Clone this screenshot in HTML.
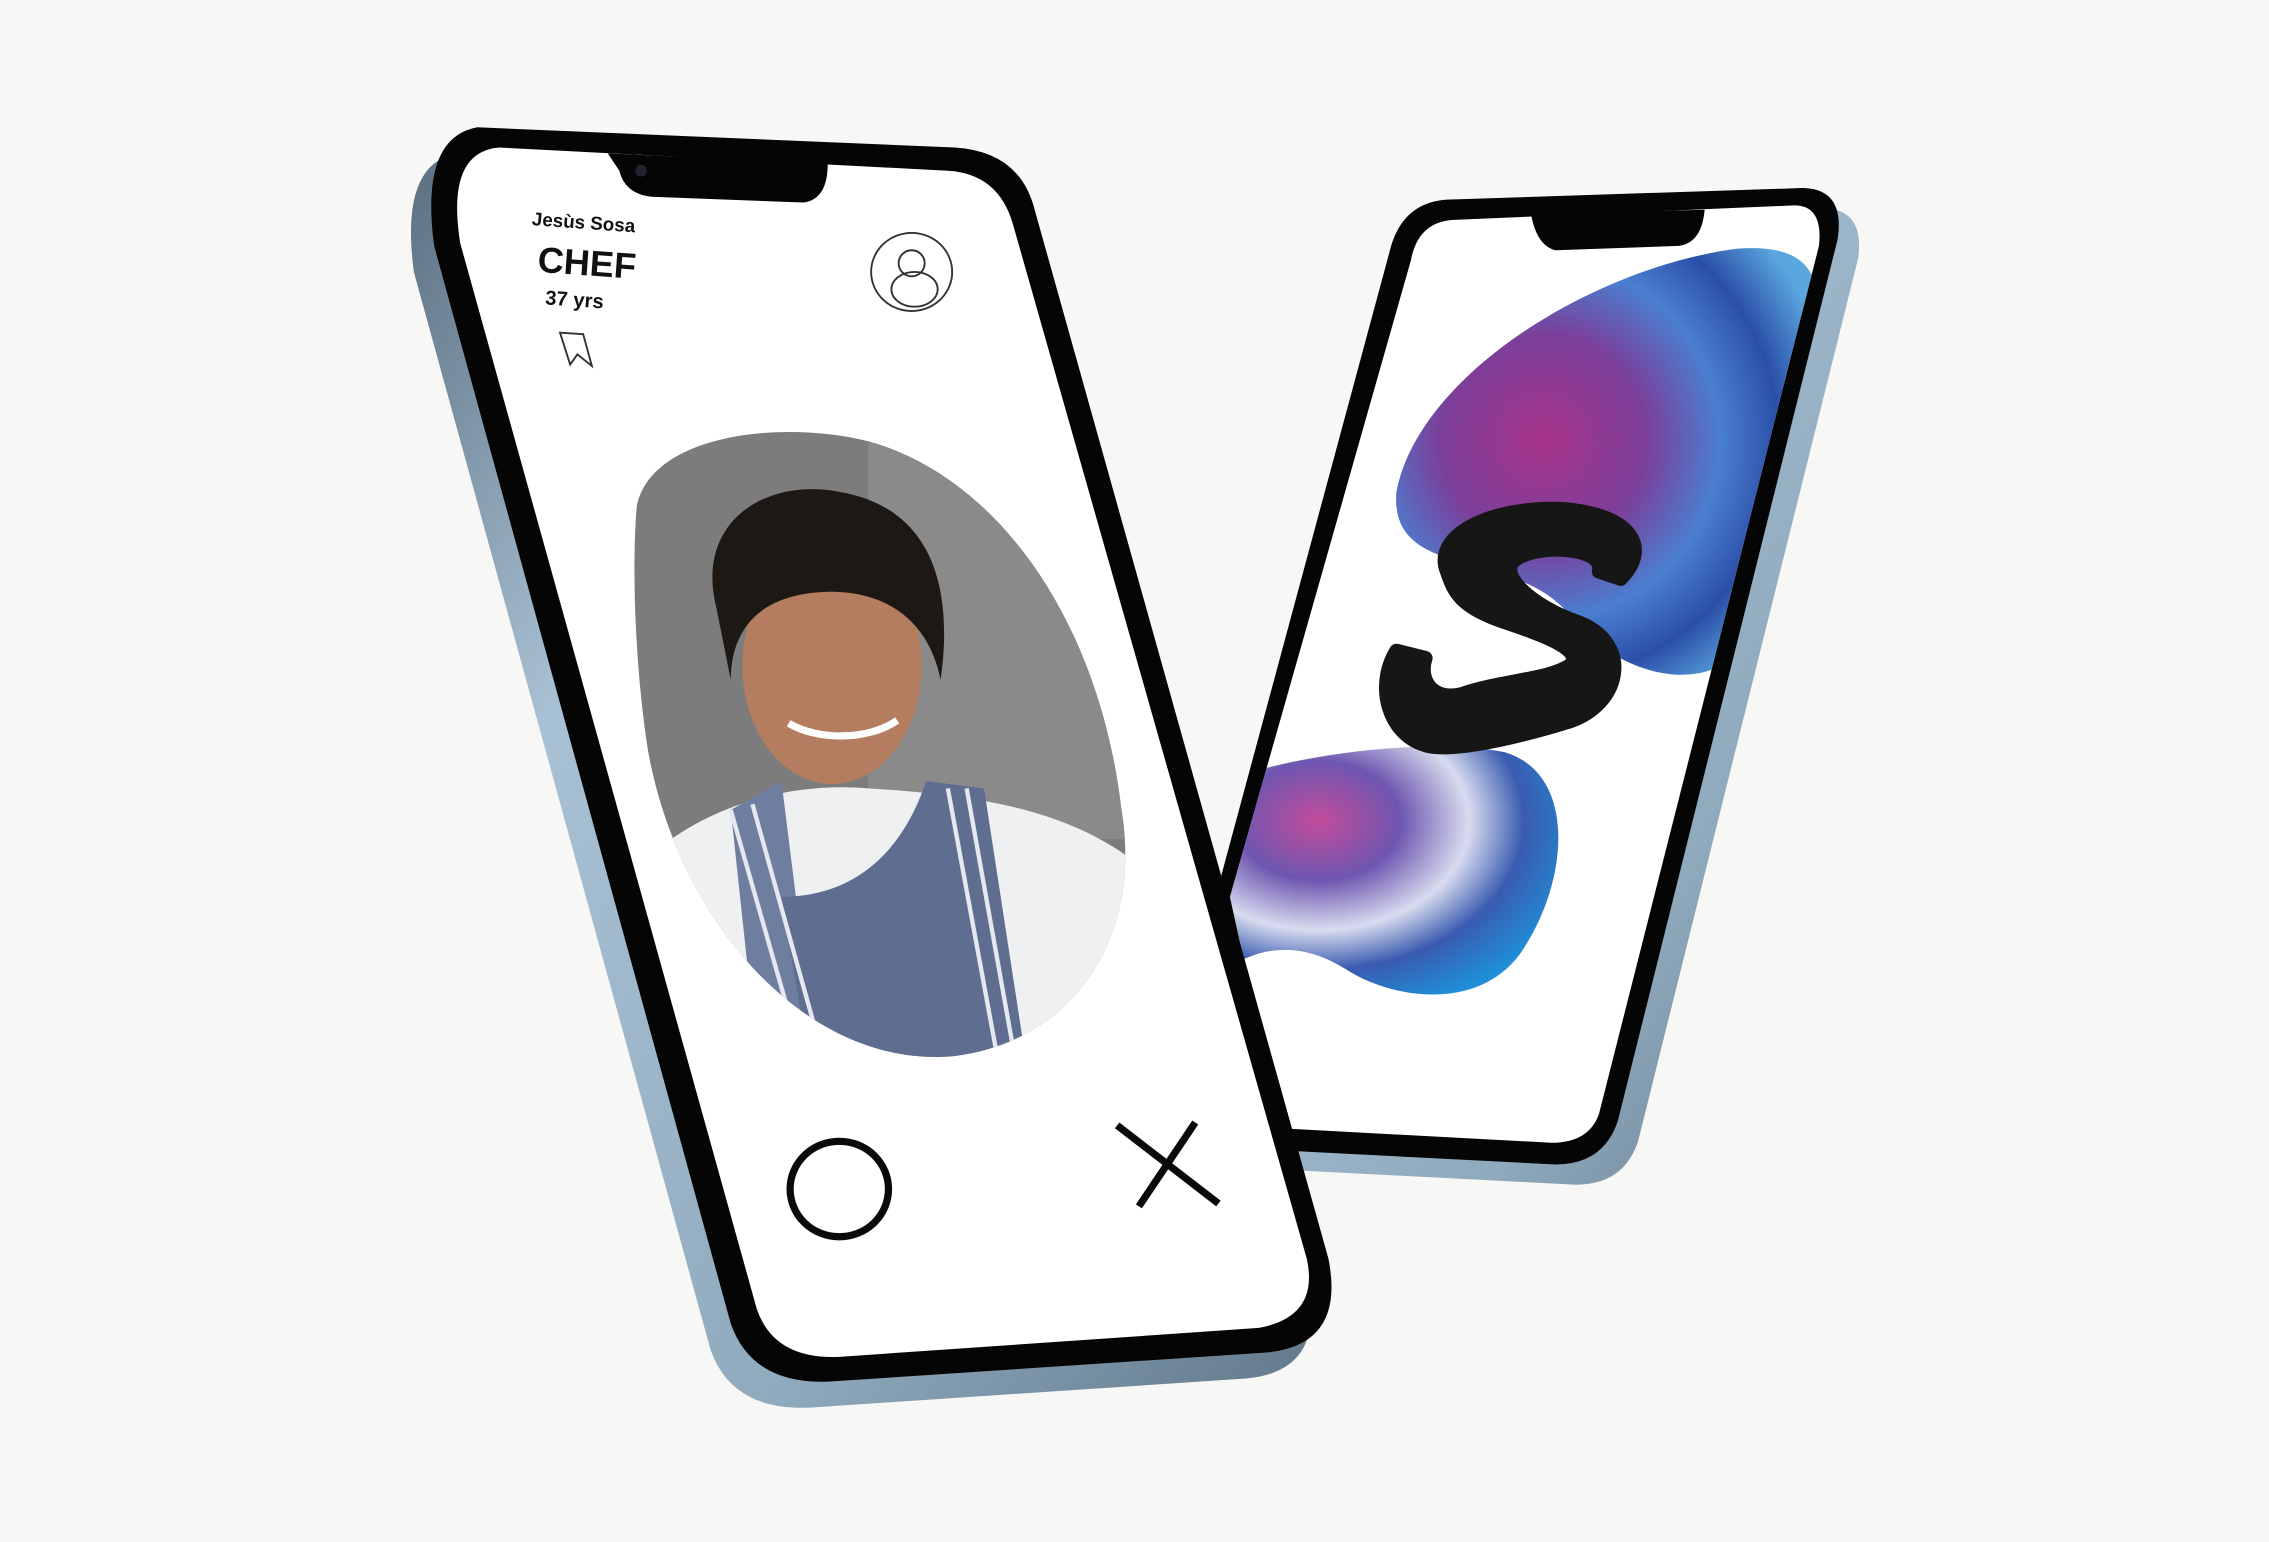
<!DOCTYPE html>
<html><head><meta charset="utf-8"><style>
html,body{margin:0;padding:0;background:#f7f7f5;}
svg{display:block}
</style></head><body>
<svg width="2269" height="1542" viewBox="0 0 1568 1066" preserveAspectRatio="none" xmlns="http://www.w3.org/2000/svg">
<defs>
<linearGradient id="frame" x1="0" y1="0" x2="1" y2="1">
<stop offset="0" stop-color="#5a6f80"/><stop offset="0.3" stop-color="#a9c1d4"/><stop offset="0.7" stop-color="#8fa9bd"/><stop offset="1" stop-color="#61788a"/>
</linearGradient>
<radialGradient id="b1" cx="0.35" cy="0.45" r="0.7">
<stop offset="0" stop-color="#a8338a"/><stop offset="0.35" stop-color="#7b3f9a"/><stop offset="0.6" stop-color="#4a7fd0"/><stop offset="0.8" stop-color="#2b4fa8"/><stop offset="1" stop-color="#5aa6de"/>
</radialGradient>
<radialGradient id="b2" cx="0.3" cy="0.3" r="0.8">
<stop offset="0" stop-color="#c24c9a"/><stop offset="0.3" stop-color="#6e56b0"/><stop offset="0.55" stop-color="#d8dcef"/><stop offset="0.75" stop-color="#3a5bb0"/><stop offset="1" stop-color="#1e8fd8"/>
</radialGradient>
<clipPath id="photo"><path d="M440,350 C450,300 540,290 600,305 C690,330 760,430 775,560 C790,650 740,720 660,730 C560,740 470,640 448,520 C440,470 436,400 440,350 Z"/></clipPath>
<clipPath id="rscreen"><path d="M1005,152 L1240,142 Q1260,142 1257,170 L1105,770 Q1098,790 1072,790 L885,780 L850,620 L975,180 Q980,153 1005,152 Z"/></clipPath>
</defs>
<rect width="1568" height="1066" fill="#f7f7f5"/>

<!-- right phone -->
<g transform="translate(14,14)"><path d="M1000,138 L1245,130 Q1275,130 1270,165 L1118,775 Q1108,805 1075,805 L880,795 L840,620 L960,175 Q968,140 1000,138 Z" fill="url(#frame)"/></g>
<path d="M1000,138 L1245,130 Q1275,130 1270,165 L1118,775 Q1108,805 1075,805 L880,795 L840,620 L960,175 Q968,140 1000,138 Z" fill="#050505"/>
<path d="M1005,152 L1240,142 Q1260,142 1257,170 L1105,770 Q1098,790 1072,790 L885,780 L850,620 L975,180 Q980,153 1005,152 Z" fill="#fff"/>
<path d="M1058,148 L1178,145 Q1176,168 1160,170 L1075,173 Q1062,170 1058,148 Z" fill="#050505"/>
<g clip-path="url(#rscreen)">
<path d="M965,340 C980,260 1100,185 1200,172 C1250,168 1265,190 1250,240 L1190,460 C1150,480 1100,450 1080,420 C1040,380 960,400 965,340 Z" fill="url(#b1)"/>
<path d="M845,540 C900,520 990,510 1040,520 C1090,535 1085,610 1050,660 C1020,700 960,690 930,670 C890,645 860,660 840,675 Z" fill="url(#b2)"/>
</g>
<path d="M1000,395 C990,370 1030,350 1080,352 C1130,356 1140,380 1120,400 L1105,395 C1110,380 1070,375 1050,385 C1030,395 1060,420 1090,430 C1130,445 1120,490 1080,500 C1040,512 1000,520 985,515 C960,508 950,475 965,450 L985,455 C980,470 990,485 1010,480 C1040,470 1070,470 1085,460 C1095,450 1070,440 1040,430 C1010,420 1005,410 1000,395 Z" fill="#161616" stroke="#161616" stroke-width="10" stroke-linejoin="round"/>

<!-- left phone -->
<g transform="translate(-14,18)"><path d="M330,88 L660,102 Q705,105 715,145 L918,870 Q930,930 875,935 L575,955 Q520,958 505,915 L300,170 Q290,95 330,88 Z" fill="url(#frame)"/></g>
<path d="M330,88 L660,102 Q705,105 715,145 L918,870 Q930,930 875,935 L575,955 Q520,958 505,915 L300,170 Q290,95 330,88 Z" fill="#050505"/>
<path d="M345,102 L655,118 Q690,120 700,155 L903,870 Q912,910 870,918 L580,938 Q535,940 523,905 L318,168 Q308,105 345,102 Z" fill="#fff"/>
<path d="M420,106 L572,113 Q572,138 555,140 L450,136 Q432,134 428,118 Z" fill="#050505"/>
<circle cx="443" cy="118" r="4" fill="#223"/>

<g transform="rotate(4 400 190)" font-family="Liberation Sans, sans-serif" fill="#111" font-weight="bold">
<text x="365" y="158" font-size="13">Jesùs Sosa</text>
<text x="371" y="190" font-size="25">CHEF</text>
<text x="378" y="212" font-size="14">37 yrs</text>
</g>
<path d="M387,230 L403,231 L409,253 L399,245 L394,252 Z" fill="none" stroke="#333" stroke-width="1.3"/>
<ellipse cx="630" cy="188" rx="28" ry="27" fill="none" stroke="#333" stroke-width="1.3"/>
<circle cx="630" cy="182" r="9" fill="none" stroke="#333" stroke-width="1.3"/>
<ellipse cx="632" cy="200" rx="16" ry="12" fill="none" stroke="#333" stroke-width="1.3"/>

<g clip-path="url(#photo)">
<rect x="420" y="280" width="380" height="470" fill="#7c7c7c"/>
<rect x="600" y="280" width="200" height="300" fill="#8a8a8a"/>
<path d="M440,600 C480,560 540,540 600,545 C680,550 740,560 790,600 L790,760 L440,760 Z" fill="#eef0f2"/>
<path d="M505,560 L540,540 L560,700 L520,700 Z" fill="#6f7e9e"/>
<path d="M640,540 L680,545 L710,740 L560,740 L540,620 C580,620 620,600 640,540 Z" fill="#5e6d90"/>
<path d="M505,560 L555,735 M520,556 L570,735 M655,545 L690,735 M668,545 L702,735" stroke="#e4e8f0" stroke-width="3"/>
<ellipse cx="575" cy="460" rx="62" ry="82" fill="#b57d60"/>
<path d="M495,420 C480,360 530,330 580,340 C640,350 660,400 650,470 C640,420 600,405 560,410 C520,415 505,440 505,470 Z" fill="#1e1814"/>
<path d="M545,500 C565,512 600,512 620,498" stroke="#fff" stroke-width="5" fill="none"/>
</g>

<ellipse cx="580" cy="822" rx="34" ry="33" fill="none" stroke="#0a0a0a" stroke-width="5"/>
<path d="M772,778 L842,832 M826,776 L787,834" stroke="#0a0a0a" stroke-width="5"/>
</svg>
</body></html>
